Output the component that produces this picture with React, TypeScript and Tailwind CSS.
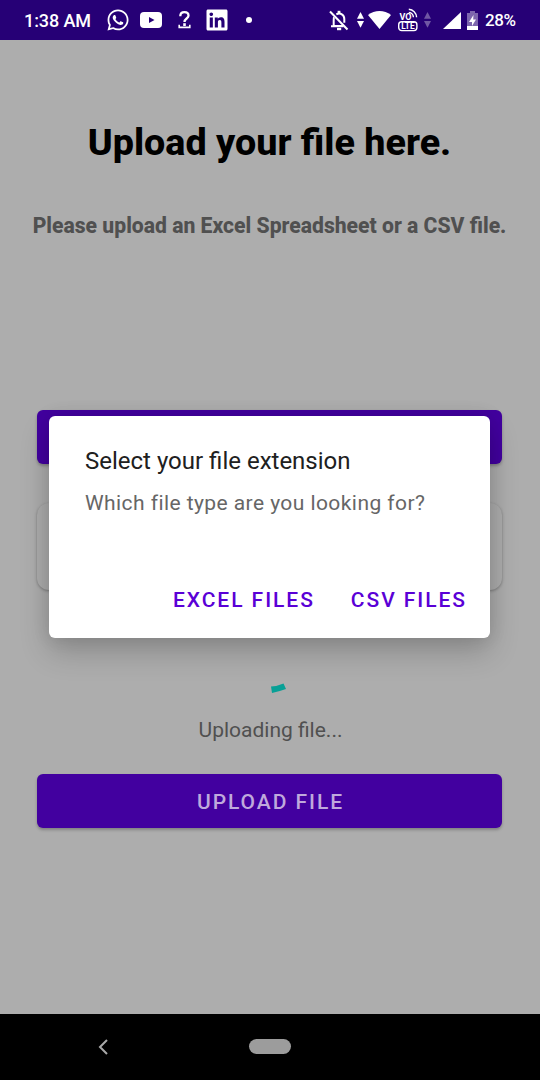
import type { ReactNode } from "react";
import { FaWhatsapp, FaLinkedin } from "react-icons/fa";

function TrafficArrows({ className }: { className: string }) {
  return (
    <svg className={className} width="7" height="16" viewBox="0 0 7 16" fill="currentColor">
      <path d="M3.5 0L7 6.8H0Z" />
      <path d="M3.5 15.8L0 9H7Z" />
    </svg>
  );
}

function StatusBar() {
  return (
    <header className="flex h-10 shrink-0 items-center bg-[#260076] text-[18px] font-medium text-white">
      <span className="ml-6 w-[82px] whitespace-nowrap text-[18px] tracking-[-0.1px]">1:38 AM</span>
      <FaWhatsapp className="size-[24px] shrink-0" />
      <svg className="ml-[10px] shrink-0" width="22" height="16" viewBox="0 0 22 16">
        <rect width="22" height="16" rx="4" fill="white" />
        <path d="M9 5L14.5 8L9 11Z" fill="#260076" />
      </svg>
      <svg className="ml-[16px] shrink-0" width="13" height="18" viewBox="0 0 13 18" fill="none" stroke="white">
        <path d="M2.3 5.2C2.3 2.6 4 1.2 6.4 1.2C8.8 1.2 10.5 2.6 10.5 4.7C10.5 7.5 6.5 7.6 6.5 11" strokeWidth="2.3" />
        <path d="M6.5 12.2V15" strokeWidth="2.6" />
        <path d="M1.2 13.8V16.4H11.8V13.8" strokeWidth="1.6" />
      </svg>
      <FaLinkedin className="ml-[14px] size-6 shrink-0" />
      <span className="ml-[17px] size-[6px] shrink-0 rounded-full bg-white" />
      <div className="ml-auto mr-6 flex items-center">
        <svg width="20" height="21" viewBox="0 0 20 21" fill="none" stroke="white" strokeWidth="2">
          <path d="M1 1.5L18.5 19.5" />
          <path d="M7.3 4.4C11.5 2.2 15.3 5 15.3 9V12.8M5 7.2C4.6 8 4.7 9 4.7 16H13.5M2 16.3H14.5" />
          <path d="M10 0.8V4" strokeWidth="2.8" />
          <path d="M8 19H12.2" strokeWidth="2.4" />
        </svg>
        <TrafficArrows className="ml-[8px] text-white" />
        <svg className="ml-[4px]" width="23" height="18" viewBox="0 0 23 18" fill="white">
          <path d="M0 4C6.5-1.3 16.5-1.3 23 4L11.5 18Z" />
        </svg>
        <svg className="ml-[7px]" width="20" height="24" viewBox="0 0 20 24" fill="none" stroke="white">
          <text x="1.5" y="12.4" fill="white" stroke="none" fontFamily="Roboto, sans-serif" fontSize="9.5" fontWeight="700" textLength="12" lengthAdjust="spacingAndGlyphs">VO</text>
          <path d="M10.8 4.4A5.2 5.2 0 0 1 15.4 9.2M10.8 1.2A8.6 8.6 0 0 1 18.6 9.2" strokeWidth="1.4" />
          <rect x="0.7" y="13.8" width="18.2" height="8.8" rx="3" strokeWidth="1.4" />
          <text x="3.2" y="21.2" fill="white" stroke="none" fontFamily="Roboto, sans-serif" fontSize="8.2" fontWeight="700" textLength="13.4" lengthAdjust="spacingAndGlyphs">LTE</text>
        </svg>
        <TrafficArrows className="ml-[6px] text-[#7057a4]" />
        <svg className="ml-[12px]" width="18" height="17" viewBox="0 0 18 17" fill="white">
          <path d="M18 0V17H0Z" />
        </svg>
        <svg className="ml-[6px]" width="11" height="19" viewBox="0 0 11 19">
          <path d="M3 0H8V2H11V19H0V2H3Z" fill="#7d66ad" />
          <path d="M0 15H11V19H0Z" fill="white" />
          <path d="M6.5 4L2 11H5V15L9 8.5H6.2Z" fill="white" />
        </svg>
        <span className="ml-[7px] w-[31px] whitespace-nowrap pt-px text-[17px] tracking-[-0.4px]">28%</span>
      </div>
    </header>
  );
}

function FilledButton({ children }: { children?: ReactNode }) {
  return (
    <button className="h-[54px] w-full rounded-[6px] bg-[#42009f] pl-[2px] pt-[3px] text-[21px] font-medium tracking-[1.95px] text-[#bfa9dc] shadow-[0_2px_3px_rgba(0,0,0,0.25)]">
      {children}
    </button>
  );
}

function Dialog() {
  return (
    <section
      role="dialog"
      className="absolute left-[49px] top-[416px] flex h-[222px] w-[441px] flex-col rounded-[6px] bg-white px-9 pt-[30px] shadow-[0_14px_30px_rgba(0,0,0,0.2),0_0_18px_rgba(0,0,0,0.10)]"
    >
      <h2 className="whitespace-nowrap text-[24px] leading-[30px] text-[#202020]">Select your file extension</h2>
      <p className="mt-3 whitespace-nowrap text-[21px] leading-[30px] tracking-[0.43px] text-[#666666]">Which file type are you looking for?</p>
      <div className="-mr-[13px] mt-[67px] flex justify-end gap-9 whitespace-nowrap text-[21px] font-medium leading-[30px] tracking-[1.95px] text-[#5a00d6]">
        <button>EXCEL FILES</button>
        <button>CSV FILES</button>
      </div>
    </section>
  );
}

export default function App() {
  return (
    <div className="relative flex h-[1080px] w-[540px] flex-col overflow-hidden bg-[#adadad] font-['Roboto',sans-serif]">
      <StatusBar />
      <main className="flex flex-1 flex-col items-center pl-[37px] pr-[38px]">
        <h1 className="mt-[78px] whitespace-nowrap text-[37.7px] font-extrabold leading-[48px] text-black">Upload your file here.</h1>
        <p className="mt-[45px] whitespace-nowrap text-[21.15px] font-extrabold leading-[30px] text-[#505050]">
          Please upload an Excel Spreadsheet or a CSV file.
        </p>
        <div className="mt-[169px] h-[54px] w-full">
          <FilledButton />
        </div>
        <div className="mt-[39px] h-[87px] w-full shrink-0 rounded-[12px] bg-[#adadad] shadow-[0_1px_3px_rgba(0,0,0,0.3)]" />
        <svg className="ml-[17px] mt-[93px] shrink-0" width="15" height="11" viewBox="0 0 15 11">
          <path d="M0 3.5Q7 3 12.5 0.5L15 6Q8 8.5 1 10Z" fill="#08a096" />
        </svg>
        <p className="ml-[2px] mt-[21px] whitespace-nowrap text-[21px] leading-[30px] text-[#505050]">Uploading file...</p>
        <div className="mt-[29px] h-[54px] w-full">
          <FilledButton>UPLOAD FILE</FilledButton>
        </div>
      </main>
      <nav className="flex h-[66px] shrink-0 items-center bg-black pb-px">
        <svg className="ml-[98px]" width="11" height="16" viewBox="0 0 11 16" fill="none" stroke="#a8a8a8" strokeWidth="2">
          <path d="M9 1L2 8L9 15" />
        </svg>
        <span className="ml-[140px] h-[15px] w-[42px] rounded-full bg-[#9c9c9c]" />
      </nav>
      <Dialog />
    </div>
  );
}
